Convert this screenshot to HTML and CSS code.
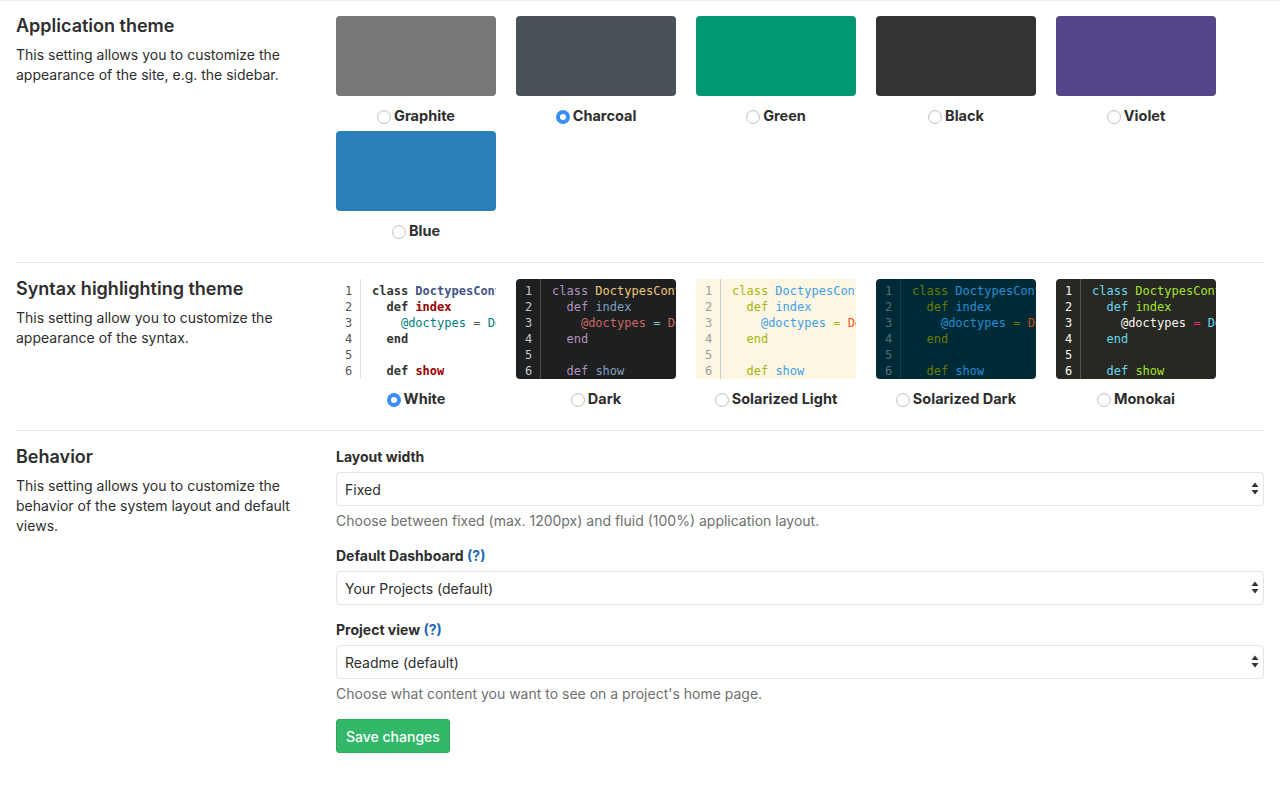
FILE: index.html
```html
<!DOCTYPE html>
<html lang="en">
<head>
<meta charset="utf-8">
<title>Preferences</title>
<link rel="stylesheet" href="styles.css">
</head>
<body>
<main class="page">
  <section class="section">
    <div class="intro">
      <h4 class="intro-title">Application theme</h4>
      <p class="intro-text">This setting allows you to customize the appearance of the site, e.g. the sidebar.</p>
    </div>
    <div class="choices">
      <label class="choice">
        <span class="swatch sw-graphite"></span>
        <span class="choice-label"><input type="radio" name="theme" class="radio"><span>Graphite</span></span>
      </label>
      <label class="choice">
        <span class="swatch sw-charcoal"></span>
        <span class="choice-label"><input type="radio" name="theme" class="radio" checked><span>Charcoal</span></span>
      </label>
      <label class="choice">
        <span class="swatch sw-green"></span>
        <span class="choice-label"><input type="radio" name="theme" class="radio"><span>Green</span></span>
      </label>
      <label class="choice">
        <span class="swatch sw-black"></span>
        <span class="choice-label"><input type="radio" name="theme" class="radio"><span>Black</span></span>
      </label>
      <label class="choice">
        <span class="swatch sw-violet"></span>
        <span class="choice-label"><input type="radio" name="theme" class="radio"><span>Violet</span></span>
      </label>
      <label class="choice">
        <span class="swatch sw-blue"></span>
        <span class="choice-label"><input type="radio" name="theme" class="radio"><span>Blue</span></span>
      </label>
    </div>
  </section>

  <section class="section">
    <div class="intro">
      <h4 class="intro-title">Syntax highlighting theme</h4>
      <p class="intro-text">This setting allow you to customize the appearance of the syntax.</p>
    </div>
    <div class="choices">
      <label class="choice">
        <span class="code code-white">
          <span class="gutter"><span>1</span><span>2</span><span>3</span><span>4</span><span>5</span><span>6</span></span>
          <span class="lines">
            <span class="ln"><span class="k">class</span> <span class="nc">DoctypesCont</span></span>
            <span class="ln">  <span class="k">def</span> <span class="nf">index</span></span>
            <span class="ln">    <span class="iv">@doctypes</span> <span class="o">=</span> <span class="cn">Do</span></span>
            <span class="ln">  <span class="k">end</span></span>
            <span class="ln"> </span>
            <span class="ln">  <span class="k">def</span> <span class="nf">show</span></span>
          </span>
        </span>
        <span class="choice-label"><input type="radio" name="syntax" class="radio" checked><span>White</span></span>
      </label>
      <label class="choice">
        <span class="code code-dark">
          <span class="gutter"><span>1</span><span>2</span><span>3</span><span>4</span><span>5</span><span>6</span></span>
          <span class="lines">
            <span class="ln"><span class="k">class</span> <span class="nc">DoctypesCont</span></span>
            <span class="ln">  <span class="k">def</span> <span class="nf">index</span></span>
            <span class="ln">    <span class="iv">@doctypes</span> <span class="o">=</span> <span class="cn">Do</span></span>
            <span class="ln">  <span class="k">end</span></span>
            <span class="ln"> </span>
            <span class="ln">  <span class="k">def</span> <span class="nf">show</span></span>
          </span>
        </span>
        <span class="choice-label"><input type="radio" name="syntax" class="radio"><span>Dark</span></span>
      </label>
      <label class="choice">
        <span class="code code-sol-light">
          <span class="gutter"><span>1</span><span>2</span><span>3</span><span>4</span><span>5</span><span>6</span></span>
          <span class="lines">
            <span class="ln"><span class="k">class</span> <span class="nc">DoctypesCont</span></span>
            <span class="ln">  <span class="k">def</span> <span class="nf">index</span></span>
            <span class="ln">    <span class="iv">@doctypes</span> <span class="o">=</span> <span class="cn">Do</span></span>
            <span class="ln">  <span class="k">end</span></span>
            <span class="ln"> </span>
            <span class="ln">  <span class="k">def</span> <span class="nf">show</span></span>
          </span>
        </span>
        <span class="choice-label"><input type="radio" name="syntax" class="radio"><span>Solarized Light</span></span>
      </label>
      <label class="choice">
        <span class="code code-sol-dark">
          <span class="gutter"><span>1</span><span>2</span><span>3</span><span>4</span><span>5</span><span>6</span></span>
          <span class="lines">
            <span class="ln"><span class="k">class</span> <span class="nc">DoctypesCont</span></span>
            <span class="ln">  <span class="k">def</span> <span class="nf">index</span></span>
            <span class="ln">    <span class="iv">@doctypes</span> <span class="o">=</span> <span class="cn">Do</span></span>
            <span class="ln">  <span class="k">end</span></span>
            <span class="ln"> </span>
            <span class="ln">  <span class="k">def</span> <span class="nf">show</span></span>
          </span>
        </span>
        <span class="choice-label"><input type="radio" name="syntax" class="radio"><span>Solarized Dark</span></span>
      </label>
      <label class="choice">
        <span class="code code-monokai">
          <span class="gutter"><span>1</span><span>2</span><span>3</span><span>4</span><span>5</span><span>6</span></span>
          <span class="lines">
            <span class="ln"><span class="k">class</span> <span class="nc">DoctypesCont</span></span>
            <span class="ln">  <span class="k">def</span> <span class="nf">index</span></span>
            <span class="ln">    <span class="iv">@doctypes</span> <span class="o">=</span> <span class="cn">Do</span></span>
            <span class="ln">  <span class="k">end</span></span>
            <span class="ln"> </span>
            <span class="ln">  <span class="k">def</span> <span class="nf">show</span></span>
          </span>
        </span>
        <span class="choice-label"><input type="radio" name="syntax" class="radio"><span>Monokai</span></span>
      </label>
    </div>
  </section>

  <section class="section section-last">
    <div class="intro">
      <h4 class="intro-title">Behavior</h4>
      <p class="intro-text">This setting allows you to customize the behavior of the system layout and default views.</p>
    </div>
    <form class="form">
      <div class="form-group">
        <label class="field-label" for="layout">Layout width</label>
        <div class="select-wrap">
          <select id="layout" class="select"><option>Fixed</option><option>Fluid</option></select>
          <svg class="select-arrow" width="8" height="13" viewBox="0 0 8 13"><path d="M4 0.5 L7.5 5 L0.5 5 Z M4 12.5 L7.5 8 L0.5 8 Z" fill="#333"/></svg>
        </div>
        <p class="help">Choose between fixed (max. 1200px) and fluid (100%) application layout.</p>
      </div>
      <div class="form-group">
        <label class="field-label" for="dashboard">Default Dashboard <a class="help-link" href="#">(?)</a></label>
        <div class="select-wrap">
          <select id="dashboard" class="select"><option>Your Projects (default)</option></select>
          <svg class="select-arrow" width="8" height="13" viewBox="0 0 8 13"><path d="M4 0.5 L7.5 5 L0.5 5 Z M4 12.5 L7.5 8 L0.5 8 Z" fill="#333"/></svg>
        </div>
      </div>
      <div class="form-group">
        <label class="field-label" for="project">Project view <a class="help-link" href="#">(?)</a></label>
        <div class="select-wrap">
          <select id="project" class="select"><option>Readme (default)</option></select>
          <svg class="select-arrow" width="8" height="13" viewBox="0 0 8 13"><path d="M4 0.5 L7.5 5 L0.5 5 Z M4 12.5 L7.5 8 L0.5 8 Z" fill="#333"/></svg>
        </div>
        <p class="help">Choose what content you want to see on a project's home page.</p>
      </div>
      <div class="actions">
        <button type="button" class="btn-save">Save changes</button>
      </div>
    </form>
  </section>
</main>
</body>
</html>
```

FILE: styles.css
```css
* { box-sizing: border-box; }

body {
  margin: 0;
  border-top: 1px solid #f0f0f0;
  font-family: Inter, "Noto Sans", "Liberation Sans", sans-serif;
  font-size: 14px;
  line-height: 20px;
  color: #2e2e2e;
  background: #fff;
}

.page {
  padding: 0 16px;
}

.section {
  display: grid;
  grid-template-columns: 288px 1fr;
  column-gap: 32px;
  padding: 15px 0 21px;
  border-bottom: 1px solid #e5e5e5;
}

.section + .section {
  padding-top: 16px;
}

.section-last {
  border-bottom: none;
}

.intro-title {
  margin: 0 0 9px;
  font-size: 18px;
  line-height: 20px;
  font-weight: 600;
  color: #2e2e2e;
}

.intro-text {
  margin: 0;
  color: #2e2e2e;
}

.choices {
  display: flex;
  flex-wrap: wrap;
  column-gap: 20px;
  row-gap: 5px;
}

.choice {
  display: flex;
  flex-direction: column;
  align-items: center;
  width: 160px;
  cursor: pointer;
}

.swatch {
  display: block;
  width: 160px;
  height: 80px;
  border-radius: 4px;
}

.sw-graphite { background: #777777; }
.sw-charcoal { background: #485157; }
.sw-green { background: #009871; }
.sw-black { background: #333333; }
.sw-violet { background: #548; }
.sw-blue { background: #2980b9; }

.choice-label {
  display: flex;
  align-items: center;
  gap: 3px;
  margin-top: 10px;
  font-size: 14.5px;
  font-weight: 700;
  color: #2e2e2e;
  height: 20px;
}

.radio {
  appearance: none;
  -webkit-appearance: none;
  margin: 1px 0 0;
  width: 14px;
  height: 14px;
  border-radius: 50%;
  border: 1px solid #c4c4c4;
  background: #fff;
  box-shadow: inset 0 1px 1px rgba(0,0,0,0.06);
  flex: none;
}

.radio:checked {
  border: 4px solid #3b8ef6;
  background: #fff;
  box-shadow: none;
}

/* Code previews */
.code {
  display: flex;
  width: 160px;
  height: 100px;
  overflow: hidden;
  border-radius: 4px;
  font-family: "DejaVu Sans Mono", "Liberation Mono", monospace;
  font-size: 12px;
  line-height: 16px;
}

.gutter {
  display: flex;
  flex-direction: column;
  align-items: center;
  width: 25px;
  padding: 4px 0 0 1px;
  border-right: 1px solid #e5e5e5;
  flex: none;
}

.lines {
  display: flex;
  flex-direction: column;
  min-width: 0;
  padding: 4px 0 0 11px;
  white-space: pre;
  overflow: hidden;
}

.ln { display: block; height: 16px; }

.code-white { background: #fff; color: #333; border-radius: 0; }
.code-white .gutter { color: #555; border-right-color: #e0e0e0; }
.code-white .k { font-weight: 700; color: #333; }
.code-white .nc { font-weight: 700; color: #445588; }
.code-white .nf { font-weight: 700; color: #990000; }
.code-white .iv { color: #008080; }
.code-white .o { color: #555; }
.code-white .cn { color: #008080; }

.code-dark { background: #1d1f21; color: #c5c8c6; }
.code-dark .gutter { color: #c5c8c6; border-right-color: #4a4c4e; }
.code-dark .k { color: #b294bb; }
.code-dark .nc { color: #f0c674; }
.code-dark .nf { color: #81a2be; }
.code-dark .iv { color: #cc6666; }
.code-dark .o { color: #8abeb7; }
.code-dark .cn { color: #cc6666; }

.code-sol-light { background: #fdf6e3; color: #657b83; }
.code-sol-light .gutter { color: #93a1a1; border-right-color: #c5d3d8; }
.code-sol-light .k { color: #a8b40f; }
.code-sol-light .nc { color: #42a0e8; }
.code-sol-light .nf { color: #42a0e8; }
.code-sol-light .iv { color: #42a0e8; }
.code-sol-light .o { color: #a8b40f; }
.code-sol-light .cn { color: #e65c2a; }

.code-sol-dark { background: #002b36; color: #93a1a1; }
.code-sol-dark .gutter { color: #586e75; border-right-color: #0b4150; }
.code-sol-dark .k { color: #6a7a00; }
.code-sol-dark .nc { color: #268bd2; }
.code-sol-dark .nf { color: #268bd2; }
.code-sol-dark .iv { color: #268bd2; }
.code-sol-dark .o { color: #6a7a00; }
.code-sol-dark .cn { color: #cb4b16; }

.code-monokai { background: #272822; color: #f8f8f2; }
.code-monokai .gutter { color: #f8f8f2; border-right-color: #55564f; }
.code-monokai .k { color: #66d9ef; }
.code-monokai .nc { color: #a6e22e; }
.code-monokai .nf { color: #a6e22e; }
.code-monokai .iv { color: #f8f8f2; }
.code-monokai .o { color: #f92672; }
.code-monokai .cn { color: #66d9ef; }

/* Form */
.form {
  margin: 0;
}

.form-group {
  margin-bottom: 15px;
}

.field-label {
  display: block;
  margin-bottom: 5px;
  font-weight: 700;
  color: #2e2e2e;
}

.help-link {
  color: #1b69b6;
  text-decoration: none;
}

.select-wrap {
  position: relative;
}

.select {
  appearance: none;
  -webkit-appearance: none;
  display: block;
  width: 100%;
  height: 34px;
  padding: 0 30px 0 8px;
  border: 1px solid #e5e5e5;
  border-radius: 4px;
  background: #fff;
  font-family: inherit;
  font-size: 14px;
  color: #2e2e2e;
}

.select-arrow {
  position: absolute;
  right: 5px;
  top: 10px;
  pointer-events: none;
}

.help {
  margin: 5px 0 0;
  color: #707070;
}

.actions {
  padding-top: 0;
}

.btn-save {
  height: 34px;
  padding: 0 9px;
  border: 1px solid #2da760;
  border-radius: 3px;
  background: #33b86a;
  color: #fff;
  font-family: inherit;
  font-size: 14px;
  font-weight: 500;
}
```
